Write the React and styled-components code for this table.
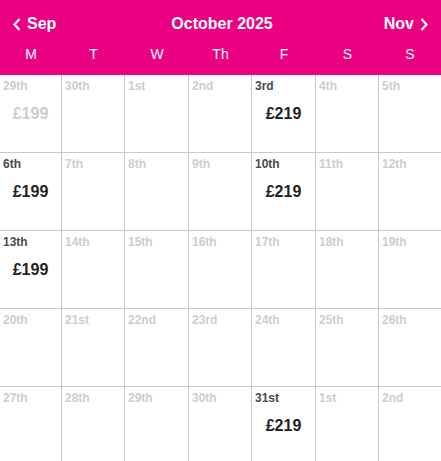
import styled, { createGlobalStyle } from 'styled-components';

const PINK = '#ec0082';
const COLUMNS = '62px 63px 64px 63px 64px 63px 1fr';

const GlobalStyle = createGlobalStyle`
  body {
    margin: 0;
    background: #fff;
    font-family: "Liberation Sans", Arial, sans-serif;
  }
`;

const Header = styled.div`
  background: ${PINK};
  color: #fff;
  height: 75px;
  padding-top: 12px;
  box-sizing: border-box;
`;

const NavRow = styled.div`
  display: flex;
  align-items: center;
  justify-content: space-between;
  height: 24px;
  padding: 0 13px 0 13px;
`;

const NavButton = styled.button`
  display: flex;
  align-items: center;
  gap: 6px;
  background: none;
  border: 0;
  padding: 0;
  color: #fff;
  font: bold 16px "Liberation Sans", Arial, sans-serif;
  cursor: pointer;
`;

const Title = styled.h1`
  margin: 0;
  font-size: 16px;
  font-weight: bold;
  margin-left: 4px;
`;

const DayNames = styled.div`
  display: grid;
  grid-template-columns: ${COLUMNS};
  margin-top: 8px;
  font-size: 14px;
  line-height: 20px;
`;

const DayName = styled.div`
  text-align: center;
`;

const Grid = styled.div`
  display: grid;
  grid-template-columns: ${COLUMNS};
  grid-auto-rows: 78px;
`;

const Cell = styled.div`
  display: flex;
  flex-direction: column;
  border-bottom: 1px solid #c8c8c8;
  border-right: 1px solid #c8c8c8;
  padding: 4px 0 0 3px;
  box-sizing: border-box;

  &:nth-child(7n) {
    border-right: 0;
  }
`;

const DayNumber = styled.span`
  font-size: 12px;
  line-height: 14px;
  font-weight: bold;
  color: ${(p) => (p.$active ? '#4a4a4a' : '#cdcdcd')};
`;

const Price = styled.span`
  margin-top: 12px;
  padding-right: 3px;
  text-align: center;
  font-size: 16px;
  line-height: 18px;
  font-weight: bold;
  color: ${(p) => (p.$active ? '#222' : '#cdcdcd')};
`;

const Chevron = ({ dir }) => (
  <svg width="8" height="13" viewBox="0 0 8 13">
    <polyline
      points={dir === 'left' ? '6.5,1 1.5,6.5 6.5,12' : '1.5,1 6.5,6.5 1.5,12'}
      fill="none"
      stroke="#fff"
      strokeWidth="2.2"
    />
  </svg>
);

const days = [
  ['29th', '£199', false],
  ['30th'], ['1st'], ['2nd'], ['3rd', '£219', true], ['4th'], ['5th'],
  ['6th', '£199', true], ['7th'], ['8th'], ['9th'], ['10th', '£219', true], ['11th'], ['12th'],
  ['13th', '£199', true], ['14th'], ['15th'], ['16th'], ['17th'], ['18th'], ['19th'],
  ['20th'], ['21st'], ['22nd'], ['23rd'], ['24th'], ['25th'], ['26th'],
  ['27th'], ['28th'], ['29th'], ['30th'], ['31st', '£219', true], ['1st'], ['2nd'],
];

const App = () => (
  <>
    <GlobalStyle />
    <Header>
      <NavRow>
        <NavButton>
          <Chevron dir="left" />
          Sep
        </NavButton>
        <Title>October 2025</Title>
        <NavButton>
          Nov
          <Chevron dir="right" />
        </NavButton>
      </NavRow>
      <DayNames>
        {['M', 'T', 'W', 'Th', 'F', 'S', 'S'].map((d, i) => (
          <DayName key={i}>{d}</DayName>
        ))}
      </DayNames>
    </Header>
    <Grid>
      {days.map(([label, price, active], i) => (
        <Cell key={i}>
          <DayNumber $active={active}>{label}</DayNumber>
          {price && <Price $active={active}>{price}</Price>}
        </Cell>
      ))}
    </Grid>
  </>
);

export default App;
